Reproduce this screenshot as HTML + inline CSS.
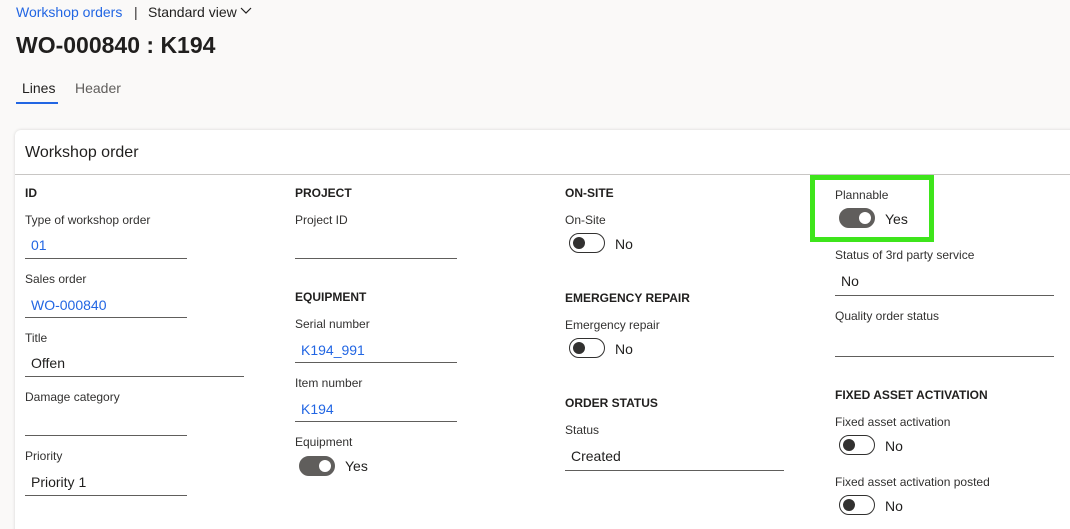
<!DOCTYPE html>
<html><head><meta charset="utf-8"><style>
html,body{margin:0;width:1070px;height:529px;overflow:hidden}
body{background:#faf9f8;font-family:"Liberation Sans",sans-serif;color:#323130;position:relative}
.a{position:absolute;line-height:20px;height:20px;white-space:nowrap}
.lb{font-size:12px;color:#323130}
.h{font-size:12px;font-weight:bold;color:#201f1e}
.v{font-size:14px;color:#201f1e}
.blue{color:#2266e3}
.ln{position:absolute;height:1px;background:#605e5c}
.tg{position:absolute;width:36px;height:20px;border:1px solid #323130;border-radius:10px;background:#fff;box-sizing:border-box}
.tg::after{content:"";position:absolute;left:3px;top:3px;width:12px;height:12px;border-radius:50%;background:#323130}
.tg.on{background:#605e5c;border-color:#605e5c}
.tg.on::after{left:auto;right:3px;background:#fff}
</style></head><body>
<div class="a blue" style="left:16px;top:2px;font-size:14px">Workshop orders</div>
<div class="a" style="left:134px;top:2px;font-size:14px">|</div>
<div class="a" style="left:148px;top:2px;font-size:14px;color:#201f1e">Standard view</div>
<svg style="position:absolute;left:240px;top:7px" width="12" height="8"><path d="M1 1L6 6L11 1" fill="none" stroke="#201f1e" stroke-width="1.2"/></svg>
<div class="a" style="left:16px;top:30px;font-size:23px;font-weight:bold;color:#201f1e;height:30px;line-height:30px">WO-000840 : K194</div>
<div class="a" style="left:22px;top:78px;font-size:14px;color:#201f1e">Lines</div>
<div style="position:absolute;left:16px;top:102px;width:42px;height:2px;background:#2266e3"></div>
<div class="a" style="left:75px;top:78px;font-size:14px;color:#605e5c">Header</div>
<div style="position:absolute;left:15px;top:130px;width:1070px;height:420px;background:#fff;border-radius:6px;box-shadow:0 0 3px rgba(0,0,0,.15)"></div>
<div class="a" style="left:25px;top:143px;font-size:16px;color:#201f1e">Workshop order</div>
<div style="position:absolute;left:15px;top:174px;width:1060px;height:1px;background:#c8c6c4"></div>

<div class="a h" style="left:25px;top:183px">ID</div>
<div class="a lb" style="left:25px;top:210px">Type of workshop order</div>
<div class="a v blue" style="left:31px;top:235px">01</div>
<div class="ln" style="left:25px;top:258px;width:162px"></div>
<div class="a lb" style="left:25px;top:269px">Sales order</div>
<div class="a v blue" style="left:31px;top:295px">WO-000840</div>
<div class="ln" style="left:25px;top:317px;width:162px"></div>
<div class="a lb" style="left:25px;top:328px">Title</div>
<div class="a v" style="left:31px;top:353px">Offen</div>
<div class="ln" style="left:25px;top:376px;width:219px"></div>
<div class="a lb" style="left:25px;top:387px">Damage category</div>
<div class="ln" style="left:25px;top:435px;width:162px"></div>
<div class="a lb" style="left:25px;top:446px">Priority</div>
<div class="a v" style="left:31px;top:472px">Priority 1</div>
<div class="ln" style="left:25px;top:495px;width:162px"></div>

<div class="a h" style="left:295px;top:183px">PROJECT</div>
<div class="a lb" style="left:295px;top:210px">Project ID</div>
<div class="ln" style="left:295px;top:258px;width:162px"></div>
<div class="a h" style="left:295px;top:287px">EQUIPMENT</div>
<div class="a lb" style="left:295px;top:314px">Serial number</div>
<div class="a v blue" style="left:301px;top:340px">K194_991</div>
<div class="ln" style="left:295px;top:362px;width:162px"></div>
<div class="a lb" style="left:295px;top:373px">Item number</div>
<div class="a v blue" style="left:301px;top:399px">K194</div>
<div class="ln" style="left:295px;top:421px;width:162px"></div>
<div class="a lb" style="left:295px;top:432px">Equipment</div>
<div class="tg on" style="left:299px;top:456px"></div>
<div class="a v" style="left:345px;top:456px">Yes</div>

<div class="a h" style="left:565px;top:183px">ON-SITE</div>
<div class="a lb" style="left:565px;top:210px">On-Site</div>
<div class="tg" style="left:569px;top:233px"></div>
<div class="a v" style="left:615px;top:234px">No</div>
<div class="a h" style="left:565px;top:288px">EMERGENCY REPAIR</div>
<div class="a lb" style="left:565px;top:315px">Emergency repair</div>
<div class="tg" style="left:569px;top:338px"></div>
<div class="a v" style="left:615px;top:339px">No</div>
<div class="a h" style="left:565px;top:393px">ORDER STATUS</div>
<div class="a lb" style="left:565px;top:420px">Status</div>
<div class="a v" style="left:571px;top:446px">Created</div>
<div class="ln" style="left:565px;top:470px;width:219px"></div>

<div style="position:absolute;left:810px;top:175px;width:124px;height:67px;border:5px solid #3ee51b;box-sizing:border-box"></div>
<div class="a lb" style="left:835px;top:185px">Plannable</div>
<div class="tg on" style="left:839px;top:208px"></div>
<div class="a v" style="left:885px;top:209px">Yes</div>
<div class="a lb" style="left:835px;top:245px">Status of 3rd party service</div>
<div class="a v" style="left:841px;top:271px">No</div>
<div class="ln" style="left:835px;top:295px;width:219px"></div>
<div class="a lb" style="left:835px;top:306px">Quality order status</div>
<div class="ln" style="left:835px;top:356px;width:219px"></div>
<div class="a h" style="left:835px;top:385px">FIXED ASSET ACTIVATION</div>
<div class="a lb" style="left:835px;top:412px">Fixed asset activation</div>
<div class="tg" style="left:839px;top:435px"></div>
<div class="a v" style="left:885px;top:436px">No</div>
<div class="a lb" style="left:835px;top:472px">Fixed asset activation posted</div>
<div class="tg" style="left:839px;top:495px"></div>
<div class="a v" style="left:885px;top:496px">No</div>
</body></html>
